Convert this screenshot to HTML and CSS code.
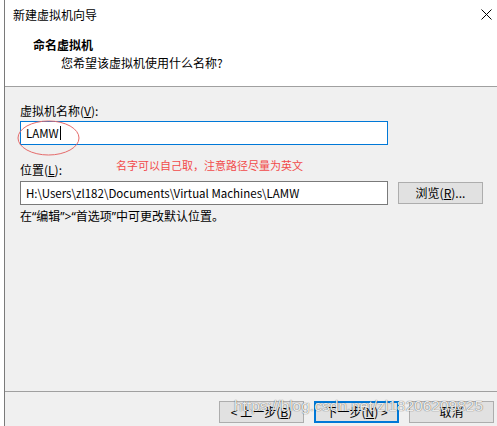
FILE: index.html
```html
<!DOCTYPE html>
<html lang="zh-CN">
<head>
    <meta charset="UTF-8">
    <title>新建虚拟机向导</title>
    <link rel="stylesheet" href="styles.css">
</head>
<body>
    <div class="wizard">
        <div class="wizard-header">
            <div class="title-row">
                <span class="window-title">新建虚拟机向导</span>
                <svg class="close-icon" width="11" height="11" viewBox="0 0 11 11">
                    <path d="M0.5 0.5 L10.5 10.5 M10.5 0.5 L0.5 10.5" stroke="#000" stroke-width="1" fill="none"/>
                </svg>
            </div>
            <div class="step-title">命名虚拟机</div>
            <div class="step-desc">您希望该虚拟机使用什么名称?</div>
        </div>

        <div class="wizard-body">
            <div class="field-label">虚拟机名称(<u>V</u>):</div>
            <div class="name-field">
                <div class="text-input focused">LAMW<span class="caret"></span></div>
                <svg class="mark" width="64" height="37" viewBox="0 0 64 37">
                    <ellipse cx="31.5" cy="18" rx="30.5" ry="17" stroke="#e56b6b" stroke-width="1" fill="none"/>
                </svg>
            </div>

            <div class="location-row">
                <div class="field-label loc-label">位置(<u>L</u>):</div>
                <div class="note">名字可以自己取，注意路径尽量为英文</div>
            </div>
            <div class="path-row">
                <div class="text-input path">H:\Users\zl182\Documents\Virtual Machines\LAMW</div>
                <button class="btn browse">浏览(<u>R</u>)...</button>
            </div>
            <div class="hint">在“编辑”&gt;“首选项”中可更改默认位置。</div>
        </div>

        <div class="wizard-footer">
            <button class="btn">&lt; 上一步(<u>B</u>)</button>
            <button class="btn default">下一步(<u>N</u>) &gt;</button>
            <button class="btn">取消</button>
            <div class="watermark">https://blog.csdn.net/zl18206209825</div>
        </div>
    </div>
</body>
</html>
```

FILE: styles.css
```css
body {
    margin: 0;
    background: #fff;
    font-family: "Noto Sans CJK SC", "Noto Sans", sans-serif;
    font-size: 12px;
    color: #000;
}

.wizard {
    margin-left: 4px;
    border-left: 1px solid #7a7a7a;
    height: 426px;
    background: #f0f0f0;
    display: flex;
    flex-direction: column;
}

.wizard-header {
    background: #fff;
    height: 86px;
    border-bottom: 1px solid #a0a0a0;
    box-sizing: content-box;
}

.title-row {
    display: flex;
    justify-content: space-between;
    align-items: center;
    padding: 7px 5px 0 8px;
    line-height: 16px;
}

.close-icon {
    margin-top: -1px;
}

.step-title {
    margin-top: 13px;
    padding-left: 28px;
    font-weight: bold;
    line-height: 18px;
}

.step-desc {
    padding-left: 56px;
    line-height: 18px;
}

.wizard-body {
    height: 304px;
    box-sizing: border-box;
    padding: 16px 0 0 15px;
}

.field-label {
    line-height: 16px;
}

.name-field {
    position: relative;
    margin-top: 2px;
    width: 368px;
}

.text-input {
    height: 24px;
    box-sizing: border-box;
    border: 1px solid #7a7a7a;
    background: #fff;
    padding-left: 5px;
    font-size: 11.5px;
    line-height: 22px;
    white-space: nowrap;
}

.text-input.focused {
    border-color: #0078d7;
}

.caret {
    display: inline-block;
    width: 1px;
    height: 14px;
    background: #000;
    vertical-align: -2px;
    margin-left: 1px;
}

.mark {
    position: absolute;
    left: -3px;
    top: -1px;
}

.location-row {
    display: flex;
    align-items: flex-start;
    margin-top: 12px;
}

.loc-label {
    margin-top: 5px;
}

.note {
    margin-left: 54px;
    color: #f24a4a;
    font-size: 11px;
    line-height: 16px;
}

.path-row {
    display: flex;
    align-items: center;
    margin-top: 3px;
}

.text-input.path {
    width: 368px;
}

.btn {
    font-family: "Noto Sans CJK SC", "Noto Sans", sans-serif;
    font-size: 12px;
    color: #000;
    width: 85px;
    height: 22px;
    padding: 0;
    background: #e1e1e1;
    border: 1px solid #adadad;
    line-height: 18px;
}

.browse {
    margin-left: 10px;
}

.hint {
    margin-top: 4px;
    font-family: "Noto Sans", "Noto Sans CJK SC", sans-serif;
    line-height: 16px;
}

.wizard-footer {
    position: relative;
    border-top: 1px solid #a0a0a0;
    display: flex;
    justify-content: flex-end;
    gap: 10px;
    padding: 9px 3px 0 0;
}

.btn.default {
    border: 2px solid #0078d7;
}

.watermark {
    position: absolute;
    left: 229px;
    top: 5px;
    font-family: "Liberation Sans", Arial, sans-serif;
    font-size: 15.5px;
    color: rgba(255, 255, 255, 0.9);
    text-shadow: 0 0 1px rgba(0, 0, 0, 0.55), 0 0 1px rgba(0, 0, 0, 0.3);
    pointer-events: none;
}
```
